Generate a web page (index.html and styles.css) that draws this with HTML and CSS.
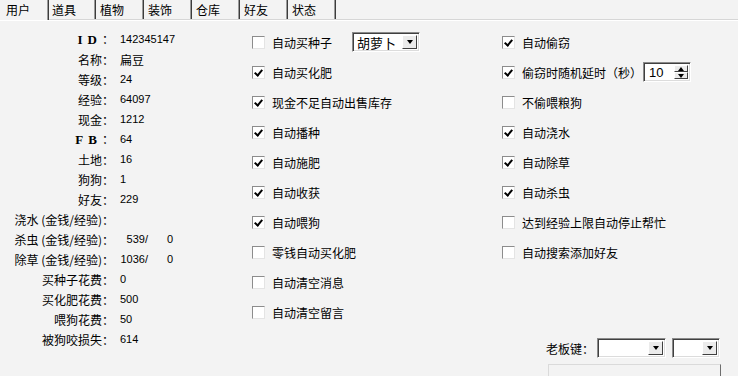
FILE: index.html
```html
<!DOCTYPE html>
<html lang="zh-CN">
<head>
    <meta charset="UTF-8">
    <title>用户</title>
    <link rel="stylesheet" href="styles.css">
</head>
<body>

<div class="tabs">
    <div class="tab tab-active">用户</div>
    <div class="tab">道具</div>
    <div class="tab">植物</div>
    <div class="tab">装饰</div>
    <div class="tab">仓库</div>
    <div class="tab">好友</div>
    <div class="tab">状态</div>
</div>

<div class="panel">
    <!-- user info -->
    <div class="info">
        <span class="lbl"><b class="wide">ID</b>：</span><span class="val">142345147</span>
        <span class="lbl">名称：</span><span class="val val-cn">扁豆</span>
        <span class="lbl">等级：</span><span class="val">24</span>
        <span class="lbl">经验：</span><span class="val">64097</span>
        <span class="lbl">现金：</span><span class="val">1212</span>
        <span class="lbl"><b class="wide">FB</b>：</span><span class="val">64</span>
        <span class="lbl">土地：</span><span class="val">16</span>
        <span class="lbl">狗狗：</span><span class="val">1</span>
        <span class="lbl">好友：</span><span class="val">229</span>
        <span class="lbl">浇水 (金钱/经验)：</span><span class="val"></span>
        <span class="lbl">杀虫 (金钱/经验)：</span><span class="val"><span class="n1">539/</span><span class="n2">0</span></span>
        <span class="lbl">除草 (金钱/经验)：</span><span class="val"><span class="n1">1036/</span><span class="n2">0</span></span>
        <span class="lbl">买种子花费：</span><span class="val">0</span>
        <span class="lbl">买化肥花费：</span><span class="val">500</span>
        <span class="lbl">喂狗花费：</span><span class="val">50</span>
        <span class="lbl">被狗咬损失：</span><span class="val">614</span>
    </div>

    <!-- middle options -->
    <div class="opts">
        <div class="opt">
            <span class="box"></span><span class="opt-text">自动买种子</span>
            <div class="combo combo-seed"><span class="combo-text">胡萝卜</span><span class="combo-btn"><i class="arrow"></i></span></div>
        </div>
        <div class="opt"><span class="box checked"></span>自动买化肥</div>
        <div class="opt"><span class="box checked"></span>现金不足自动出售库存</div>
        <div class="opt"><span class="box checked"></span>自动播种</div>
        <div class="opt"><span class="box checked"></span>自动施肥</div>
        <div class="opt"><span class="box checked"></span>自动收获</div>
        <div class="opt"><span class="box checked"></span>自动喂狗</div>
        <div class="opt"><span class="box"></span>零钱自动买化肥</div>
        <div class="opt"><span class="box"></span>自动清空消息</div>
        <div class="opt"><span class="box"></span>自动清空留言</div>
    </div>

    <!-- right options -->
    <div class="opts opts-right">
        <div class="opt"><span class="box checked"></span>自动偷窃</div>
        <div class="opt">
            <span class="box checked"></span>偷窃时随机延时（秒）
            <div class="spin"><span class="spin-text">10</span><span class="spin-btns"><span class="spin-btn"><i class="arrow arrow-up"></i></span><span class="spin-btn"><i class="arrow"></i></span></span></div>
        </div>
        <div class="opt"><span class="box"></span>不偷喂粮狗</div>
        <div class="opt"><span class="box checked"></span>自动浇水</div>
        <div class="opt"><span class="box checked"></span>自动除草</div>
        <div class="opt"><span class="box checked"></span>自动杀虫</div>
        <div class="opt"><span class="box"></span>达到经验上限自动停止帮忙</div>
        <div class="opt"><span class="box"></span>自动搜索添加好友</div>

        <div class="boss">
            <span>老板键：</span>
            <div class="combo combo-key1"><span class="combo-text"></span><span class="combo-btn"><i class="arrow"></i></span></div>
            <div class="combo combo-key2"><span class="combo-text"></span><span class="combo-btn"><i class="arrow"></i></span></div>
        </div>
        <div class="save-btn"></div>
    </div>
</div>

</body>
</html>
```

FILE: styles.css
```css
* {
    box-sizing: border-box;
}

body {
    margin: 0;
    width: 738px;
    height: 376px;
    overflow: hidden;
    background-color: #f3f3f3;
    color: #000;
    font-family: "Noto Sans CJK SC", sans-serif;
    font-size: 12px;
}

/* Tabs */
.tabs {
    display: flex;
    height: 20px;
    border-bottom: 1px solid #d6d6d6;
    box-shadow: 0 1px 0 #fff;
}

.tab {
    width: 48px;
    padding-left: 4px;
    line-height: 19px;
    border-right: 1px solid #3c3c3c;
    box-shadow: inset -1px 0 0 #9a9a9a;
}

.tab:nth-child(2) {
    width: 47px;
    padding-left: 3px;
}

.tab-active {
    width: 49px;
    padding-left: 6px;
    height: 20px;
    margin-bottom: -1px;
    background-color: #f3f3f3;
    position: relative;
}

/* Panel */
.panel {
    display: flex;
}

.info {
    width: 252px;
    padding-top: 9px;
    display: grid;
    grid-template-columns: 114px auto;
    grid-auto-rows: 20px;
    column-gap: 6px;
    align-items: center;
}

.lbl {
    text-align: right;
    white-space: nowrap;
}

.wide {
    font-family: "Liberation Serif", serif;
    font-size: 13px;
    letter-spacing: 5px;
}

.val {
    font-family: "Liberation Sans", "Noto Sans CJK SC", sans-serif;
    font-size: 11px;
    white-space: nowrap;
}

.val-cn {
    font-size: 12px;
}

.n1 {
    display: inline-block;
    width: 28px;
    text-align: right;
}

.n2 {
    display: inline-block;
    width: 25px;
    text-align: right;
}

/* Check options */
.opts {
    width: 250px;
    padding-top: 7px;
}

.opts-right {
    flex: 1;
}

.opt {
    display: flex;
    align-items: center;
    height: 30px;
    white-space: nowrap;
}

.box {
    width: 13px;
    height: 13px;
    margin-right: 7px;
    flex-shrink: 0;
    background-color: #fff;
    border: 1px solid;
    border-color: #8c8c8c #e4e4e4 #e4e4e4 #8c8c8c;
    position: relative;
}

.box.checked::after {
    content: "";
    position: absolute;
    left: 2px;
    top: 1px;
    width: 3px;
    height: 6px;
    border: solid #000;
    border-width: 0 2px 2px 0;
    transform: translate(1px, 0) rotate(40deg);
}

.opt-text {
    width: 60px;
}

/* Combo / spin */
.combo,
.spin {
    display: flex;
    height: 20px;
    background-color: #fff;
    border: 1px solid;
    border-color: #8a8a8a #fff #fff #8a8a8a;
    box-shadow: inset 1px 1px 0 #404040, inset -1px -1px 0 #dcdcdc;
    padding: 2px;
}

.combo-seed {
    width: 68px;
    margin-left: 20px;
}

.combo-text,
.spin-text {
    flex: 1;
    padding-left: 2px;
    line-height: 16px;
    font-size: 13px;
}

.combo-btn,
.spin-btn {
    width: 15px;
    display: flex;
    align-items: center;
    justify-content: center;
    background-color: #ebebeb;
    border: 1px solid;
    border-color: #fff #404040 #404040 #fff;
}

.arrow {
    width: 0;
    height: 0;
    border-left: 3.5px solid transparent;
    border-right: 3.5px solid transparent;
    border-top: 4px solid #000;
}

.arrow-up {
    border-top: 0;
    border-bottom: 4px solid #000;
}

.spin {
    width: 48px;
    margin-left: 1px;
}

.spin-text {
    font-family: "Liberation Sans", sans-serif;
    font-size: 13px;
    padding-left: 3px;
}

.spin-btns {
    display: flex;
    flex-direction: column;
}

.spin-btn {
    width: 14px;
    height: 8px;
}

/* Boss key */
.boss {
    display: flex;
    align-items: center;
    margin-top: 71px;
    margin-left: 44px;
    height: 20px;
}

.combo-key1 {
    width: 69px;
    margin-left: 3px;
}

.combo-key2 {
    width: 48px;
    margin-left: 6px;
}

.save-btn {
    margin-top: 6px;
    margin-left: 46px;
    width: 173px;
    height: 30px;
    border: 1px solid;
    border-color: #dadada #6e6e6e #6e6e6e #dadada;
}
```
